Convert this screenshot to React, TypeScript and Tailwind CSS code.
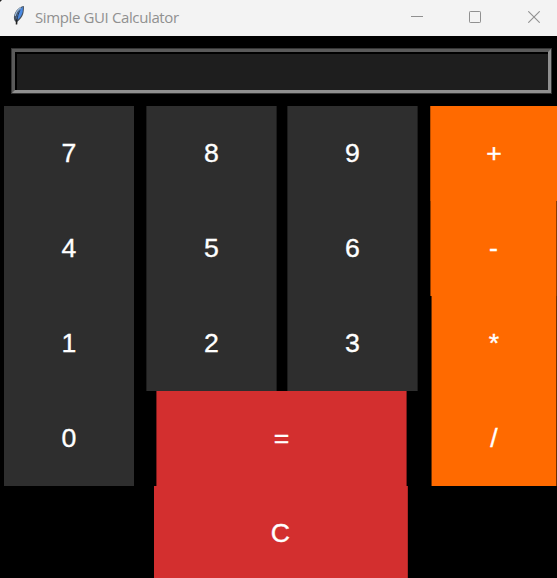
import React from "react";

type KeyProps = { label: string; className: string };

function Key({ label, className }: KeyProps) {
  return (
    <button
      type="button"
      className={`flex h-[95px] shrink-0 items-center justify-center pb-0.5 text-[26.67px] leading-[30px] text-white [-webkit-text-stroke:0.35px_white] ${className}`}
    >
      {label}
    </button>
  );
}

const digit = "bg-[#2e2e2e]";
const operator = "bg-[#ff6a00]";
const action = "bg-[#d32f2f]";

const middleRows = [
  ["8", "9"],
  ["5", "6"],
  ["2", "3"],
];

function Feather() {
  return (
    <svg width="13" height="21" viewBox="0 0 13 21" className="shrink-0">
      <path d="M11.800.9C8.500 1.300 4.900 4 3 8c-1.500 3.300-1.300 5.700-.5 7.500l1.700 1.800C8 15.200 10.900 11.500 11.600 7c.4-2.500.5-4.300.2-6.100z" fill="#465260" />
      <path d="M10.900 1.800C7.500 4 5.500 8 4.500 12.500l.4 2.700C8 13.300 10 10 10.700 6.500z" fill="#4a8ae4" />
      <path d="M9 2.500C6.200 4.400 4 7.300 3.200 11" stroke="#9dbbdc" strokeWidth="1.200" fill="none" />
      <path d="M8 5.500C6.200 8.500 5.300 11.500 4.600 19" stroke="#26303b" strokeWidth=".9" fill="none" />
      <path d="M4.500 14.500v5" stroke="#222" strokeWidth="1.500" />
    </svg>
  );
}

function TitleBar() {
  return (
    <header className="relative flex h-9 shrink-0 items-center bg-[#f3f3f3] text-[#909090]">
      <svg width="3" height="3" viewBox="0 0 3 3" className="absolute left-0 top-0">
        <path d="M0 0h2L0 2z" fill="#222" />
      </svg>
      <div className="mb-[5px] ml-3">
        <Feather />
      </div>
      <h1 className="mb-[3px] ml-2.5 w-[146px] whitespace-nowrap font-['Open_Sans','Noto_Sans',sans-serif] text-[15px] leading-5 tracking-[-0.38px]">
        Simple GUI Calculator
      </h1>
      <div className="mb-[3px] ml-auto mr-[17px] flex items-center">
        <svg width="12" height="14" viewBox="0 0 12 14" fill="none" stroke="currentColor" className="mr-[46px]">
          <path d="M0 6.500h12" />
        </svg>
        <svg width="12" height="12" viewBox="0 0 12 12" fill="none" stroke="currentColor" className="mr-[47px] mt-px">
          <rect x=".5" y=".5" width="11" height="11" rx=".7" />
        </svg>
        <svg width="12" height="12" viewBox="0 0 12 12" fill="none" stroke="currentColor" className="mt-px">
          <path d="M.3.3l11.400 11.400M11.700.3L.3 11.700" strokeWidth="1.100" />
        </svg>
      </div>
    </header>
  );
}

export default function App() {
  return (
    <div className="flex h-[578px] w-[557px] flex-col overflow-hidden bg-black font-['Liberation_Sans',Arial,sans-serif]">
      <TitleBar />
      <div className="ml-[11px] mt-3 flex h-[46px] w-[541px] shrink-0 border border-[#353535]">
        <div className="flex-1 border-[3px] border-b-[#909090] border-l-[#5a5a5a] border-r-[#909090] border-t-[#5a5a5a]">
          <div className="h-full border-l-2 border-t-2 border-black bg-[#1e1e1e]" />
        </div>
      </div>
      <main className="mt-3 flex shrink-0">
        <div className="ml-1 flex flex-col">
          {["7", "4", "1", "0"].map((n) => (
            <Key key={n} label={n} className={`${digit} w-[130px]`} />
          ))}
        </div>
        <div className="ml-3 flex w-[272px] flex-col">
          {middleRows.map(([left, right]) => (
            <div key={left} className="flex justify-between">
              <Key label={left} className={`${digit} w-[131px] border-x border-[#1c1c1c]`} />
              <Key label={right} className={`${digit} w-[131px] border-x border-[#1c1c1c]`} />
            </div>
          ))}
          <Key label="=" className={`${action} ml-2.5 w-[251px] border-x border-[#7a1b1b]`} />
          <Key label="C" className={`${action} ml-2 w-[254px] border-r border-[#ad2727]`} />
        </div>
        <div className="ml-3 flex flex-col">
          <Key label="+" className={`${operator} w-[127px] border-l border-[#bd4f00]`} />
          <Key label="-" className={`${operator} w-[127px] border-x border-[#8f3c00]`} />
          <Key label="*" className={`${operator} ml-px w-[126px] border-x border-[#703000]`} />
          <Key label="/" className={`${operator} ml-px w-[126px] border-x border-[#703000]`} />
        </div>
      </main>
    </div>
  );
}
